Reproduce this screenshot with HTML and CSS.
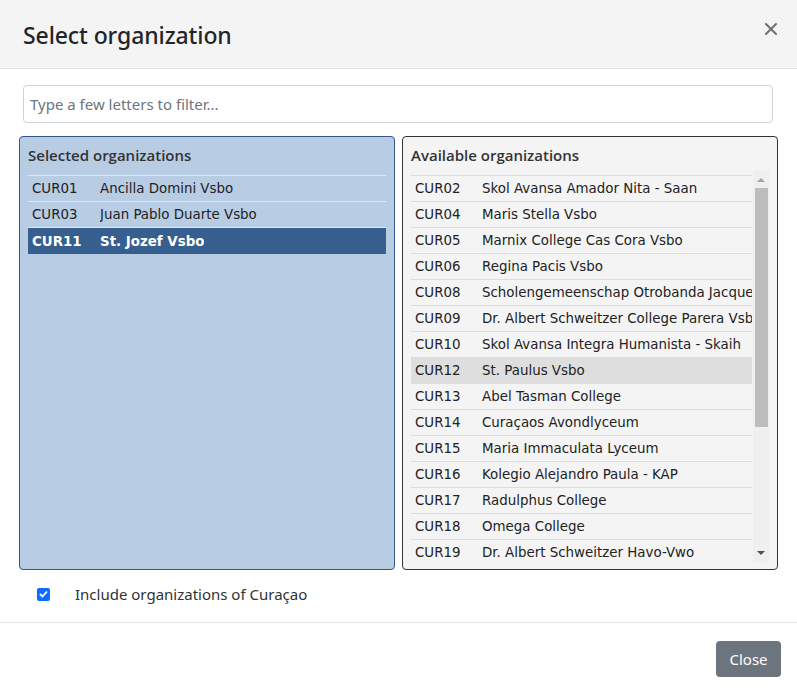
FILE: index.html
```html
<!DOCTYPE html>
<html>
<head>
<meta charset="utf-8">
<link rel="stylesheet" href="styles.css">
</head>
<body>
<div class="modal">
  <div class="modal-header">
    <h5 class="modal-title">Select organization</h5>
    <button class="btn-x" aria-label="Close">
      <svg width="12" height="12" viewBox="0 0 12 12"><path d="M1 1 L11 11 M11 1 L1 11" stroke="#6f6f6f" stroke-width="2" stroke-linecap="square"/></svg>
    </button>
  </div>
  <div class="modal-body">
    <input class="filter" type="text" placeholder="Type a few letters to filter...">
    <div class="panels">
      <div class="panel panel-selected">
        <div class="panel-head">Selected organizations</div>
        <div class="list">
          <div class="row"><span class="code">CUR01</span><span class="name">Ancilla Domini Vsbo</span></div>
          <div class="row"><span class="code">CUR03</span><span class="name">Juan Pablo Duarte Vsbo</span></div>
          <div class="row active"><span class="code">CUR11</span><span class="name">St. Jozef Vsbo</span></div>
        </div>
      </div>
      <div class="panel panel-available">
        <div class="panel-head">Available organizations</div>
        <div class="list-wrap">
          <div class="list">
            <div class="row"><span class="code">CUR02</span><span class="name">Skol Avansa Amador Nita - Saan</span></div>
            <div class="row"><span class="code">CUR04</span><span class="name">Maris Stella Vsbo</span></div>
            <div class="row"><span class="code">CUR05</span><span class="name">Marnix College Cas Cora Vsbo</span></div>
            <div class="row"><span class="code">CUR06</span><span class="name">Regina Pacis Vsbo</span></div>
            <div class="row"><span class="code">CUR08</span><span class="name">Scholengemeenschap Otrobanda Jacques Veeris</span></div>
            <div class="row"><span class="code">CUR09</span><span class="name">Dr. Albert Schweitzer College Parera Vsbo</span></div>
            <div class="row"><span class="code">CUR10</span><span class="name">Skol Avansa Integra Humanista - Skaih</span></div>
            <div class="row hover"><span class="code">CUR12</span><span class="name">St. Paulus Vsbo</span></div>
            <div class="row"><span class="code">CUR13</span><span class="name">Abel Tasman College</span></div>
            <div class="row"><span class="code">CUR14</span><span class="name">Curaçaos Avondlyceum</span></div>
            <div class="row"><span class="code">CUR15</span><span class="name">Maria Immaculata Lyceum</span></div>
            <div class="row"><span class="code">CUR16</span><span class="name">Kolegio Alejandro Paula - KAP</span></div>
            <div class="row"><span class="code">CUR17</span><span class="name">Radulphus College</span></div>
            <div class="row"><span class="code">CUR18</span><span class="name">Omega College</span></div>
            <div class="row"><span class="code">CUR19</span><span class="name">Dr. Albert Schweitzer Havo-Vwo</span></div>
          </div>
          <div class="scrollbar">
            <div class="arrow arrow-up"></div>
            <div class="thumb"></div>
            <div class="arrow arrow-down"></div>
          </div>
        </div>
      </div>
    </div>
    <label class="check">
      <span class="box"><svg width="9" height="8" viewBox="0 0 9 8"><path d="M1 4 L3.5 6.5 L8 1.5" fill="none" stroke="#fff" stroke-width="1.8"/></svg></span>
      <span class="check-label">Include organizations of Curaçao</span>
    </label>
  </div>
  <div class="modal-footer">
    <button class="btn-close">Close</button>
  </div>
</div>
</body>
</html>
```

FILE: styles.css
```css
* { box-sizing: border-box; }
html, body { margin: 0; padding: 0; background: #fff; }
body { font-family: "Noto Sans", "Open Sans", sans-serif; color: #212529; }

.modal {
  width: 797px;
  height: 692px;
  display: flex;
  flex-direction: column;
  background: #fff;
}

.modal-header {
  height: 69px;
  flex: none;
  background: #f4f4f4;
  border-bottom: 1px solid #dee2e6;
  display: flex;
  align-items: center;
  justify-content: space-between;
  padding: 2px 20px 0 23px;
}
.modal-title {
  margin: 0;
  font-size: 23px;
  font-weight: 500;
  color: #212529;
  letter-spacing: -0.1px;
}
.btn-x {
  border: 0;
  background: none;
  padding: 0;
  width: 12px;
  height: 12px;
  display: flex;
  margin-bottom: 12px;
}

.modal-body {
  flex: 1;
  padding: 16px 20px 0 19px;
  display: flex;
  flex-direction: column;
  min-height: 0;
}
.filter {
  margin: 0 4px 0 4px;
  height: 38px;
  flex: none;
  border: 1px solid #ced4da;
  border-radius: 4px;
  padding: 0 6px;
  font-family: "Noto Sans", sans-serif;
  font-size: 15px;
  color: #212529;
}
.filter::placeholder { color: #6c757d; }

.panels {
  display: grid;
  grid-template-columns: 376px 376px;
  grid-template-rows: 434px;
  gap: 7px;
  margin-top: 13px;
  height: 434px;
  flex: none;
}
.panel {
  border: 1px solid;
  border-radius: 4px;
  padding: 8px 8px 7px 8px;
  display: flex;
  flex-direction: column;
  min-height: 0;
  overflow: hidden;
  font-family: "DejaVu Sans", sans-serif;
  font-size: 13.4px;
}
.panel-selected { background: #b8cce4; border-color: #34568a; color: #222; }
.panel-available { background: #f4f4f4; border-color: #333; color: #222; }

.panel-head {
  height: 30px;
  flex: none;
  font-family: "Open Sans", sans-serif;
  font-weight: 600;
  font-size: 15px;
  line-height: 20px;
  color: #333;
}
.panel-selected .list { border-top: 1px solid #dfe7f2; }
.panel-selected .row { border-bottom: 1px solid #dfe7f2; }

.list { display: flex; flex-direction: column; }
.row {
  height: 26px;
  flex: none;
  display: flex;
  align-items: center;
  padding-left: 4px;
  white-space: nowrap;
  overflow: hidden;
}
.code { width: 67px; flex: none; }
.name { overflow: hidden; }
.panel-selected .code { width: 68px; }
.row.active {
  background: #365f8f;
  color: #fff;
  font-weight: bold;
  border-bottom: 0;
}

.list-wrap {
  flex: 1;
  display: flex;
  min-height: 0;
}
.panel-available .list {
  flex: 1;
  min-width: 0;
  overflow: hidden;
  border-top: 1px solid #dcdcdc;
  margin-right: 1px;
}
.panel-available .row { border-bottom: 1px solid #dcdcdc; }
.panel-available .row.hover { background: #dedede; }

.scrollbar {
  width: 16px;
  flex: none;
  background: #efefef;
  margin-top: -4px;
  display: flex;
  flex-direction: column;
  align-items: center;
}
.arrow { width: 0; height: 0; border-left: 4px solid transparent; border-right: 4px solid transparent; }
.arrow-up { border-bottom: 4px solid #a3a3a3; margin-top: 7px; margin-bottom: 6px; }
.thumb { width: 13px; height: 239px; background: #bdbdbd; margin-left: 1px; }
.arrow-down { border-top: 4px solid #505050; margin-top: auto; margin-bottom: 7px; }

.check {
  display: flex;
  align-items: center;
  height: 30px;
  margin-top: 9px;
  padding-left: 18px;
  flex: none;
}
.box {
  width: 13px;
  height: 13px;
  border-radius: 2px;
  background: #0d6efd;
  display: flex;
  align-items: center;
  justify-content: center;
}
.check-label {
  margin-left: 25px;
  font-size: 15px;
  color: #333;
}

.modal-footer {
  height: 70px;
  flex: none;
  border-top: 1px solid #dee2e6;
  display: flex;
  align-items: center;
  justify-content: flex-end;
  padding: 0 16px 0 0;
}
.btn-close {
  width: 65px;
  height: 36px;
  background: #6c757d;
  color: #fff;
  border: 0;
  border-radius: 4px;
  font-family: "Noto Sans", sans-serif;
  font-size: 15px;
  margin-top: 2px;
}
```
